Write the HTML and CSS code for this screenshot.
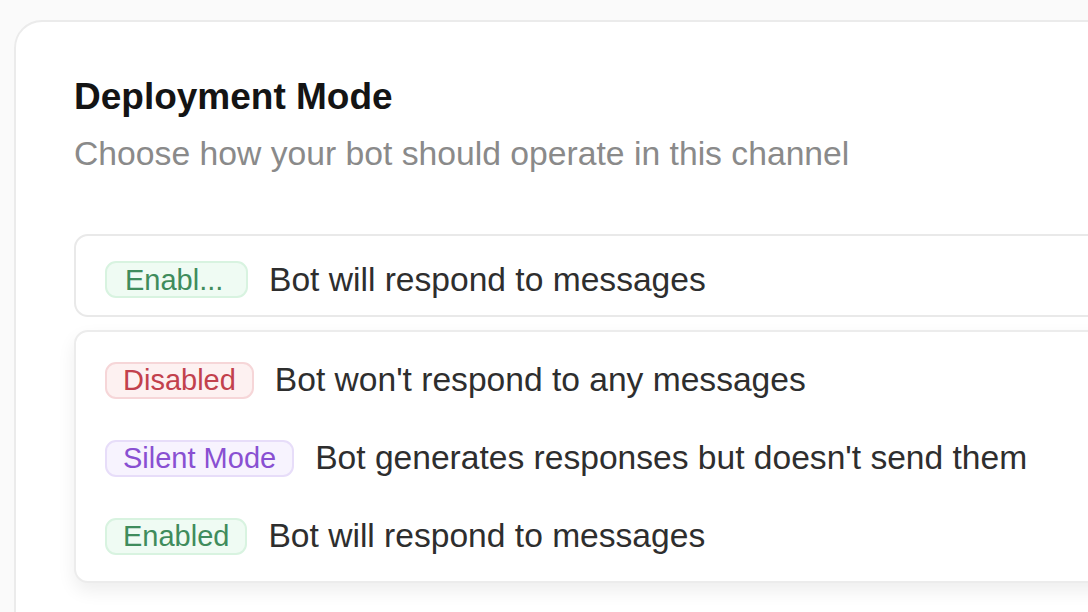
FILE: index.html
```html
<!DOCTYPE html>
<html lang="en">
<head>
<meta charset="utf-8">
<title>Deployment Mode</title>
<link rel="stylesheet" href="styles.css">
</head>
<body>
<div class="card">
  <h2 class="title">Deployment Mode</h2>
  <p class="subtitle">Choose how your bot should operate in this channel</p>

  <div class="trigger">
    <span class="badge badge-green badge-trunc">Enabl...</span>
    <span class="desc">Bot will respond to messages</span>
  </div>

  <div class="menu">
    <div class="option">
      <span class="badge badge-red">Disabled</span>
      <span class="desc">Bot won't respond to any messages</span>
    </div>
    <div class="option">
      <span class="badge badge-purple">Silent Mode</span>
      <span class="desc">Bot generates responses but doesn't send them</span>
    </div>
    <div class="option">
      <span class="badge badge-green">Enabled</span>
      <span class="desc">Bot will respond to messages</span>
    </div>
  </div>
</div>
</body>
</html>
```

FILE: styles.css
```css
html, body {
  margin: 0;
  padding: 0;
  height: 100%;
  overflow: hidden;
  background: #fafafa;
  font-family: "Liberation Sans", Arial, sans-serif;
}

.card {
  box-sizing: border-box;
  margin: 20px 0 0 14px;
  width: 1200px;
  height: 700px;
  background: #ffffff;
  border: 2px solid #ebebeb;
  border-radius: 28px;
  padding: 54px 0 0 58px;
}

.title {
  margin: 0;
  font-size: 37px;
  line-height: 42px;
  font-weight: 700;
  color: #141414;
}

.subtitle {
  margin: 15px 0 0 0;
  font-size: 33.7px;
  line-height: 40px;
  color: #8a8a8a;
}

.trigger {
  box-sizing: border-box;
  margin-top: 61px;
  height: 83px;
  border: 2px solid #e9e9e9;
  border-radius: 14px;
  display: flex;
  align-items: center;
  padding: 8px 0 0 29px;
  background: #fff;
}

.menu {
  box-sizing: border-box;
  margin-top: 13px;
  height: 253px;
  border: 2px solid #ececec;
  border-radius: 14px;
  background: #fff;
  box-shadow: 0 8px 18px rgba(0, 0, 0, 0.07);
  display: flex;
  flex-direction: column;
  gap: 38px;
  padding: 28px 0 0 29px;
}

.option {
  display: flex;
  align-items: center;
}

.badge {
  box-sizing: border-box;
  height: 37px;
  display: inline-flex;
  align-items: center;
  padding: 0 16px;
  border: 2px solid;
  border-radius: 11px;
  font-size: 29px;
  line-height: 32px;
  white-space: nowrap;
}

.badge-trunc {
  width: 143px;
  padding: 0 18px;
}

.badge-green {
  background: #effbf3;
  border-color: #d8f3e0;
  color: #3f8c5c;
}

.badge-red {
  background: #fdf1f1;
  border-color: #f6d6d8;
  color: #c2414d;
}

.badge-purple {
  background: #f7f3fe;
  border-color: #e7ddf9;
  color: #8950d2;
}

.desc {
  margin-left: 21px;
  font-size: 33.6px;
  line-height: 40px;
  color: #2e2e2e;
  white-space: nowrap;
}
```
